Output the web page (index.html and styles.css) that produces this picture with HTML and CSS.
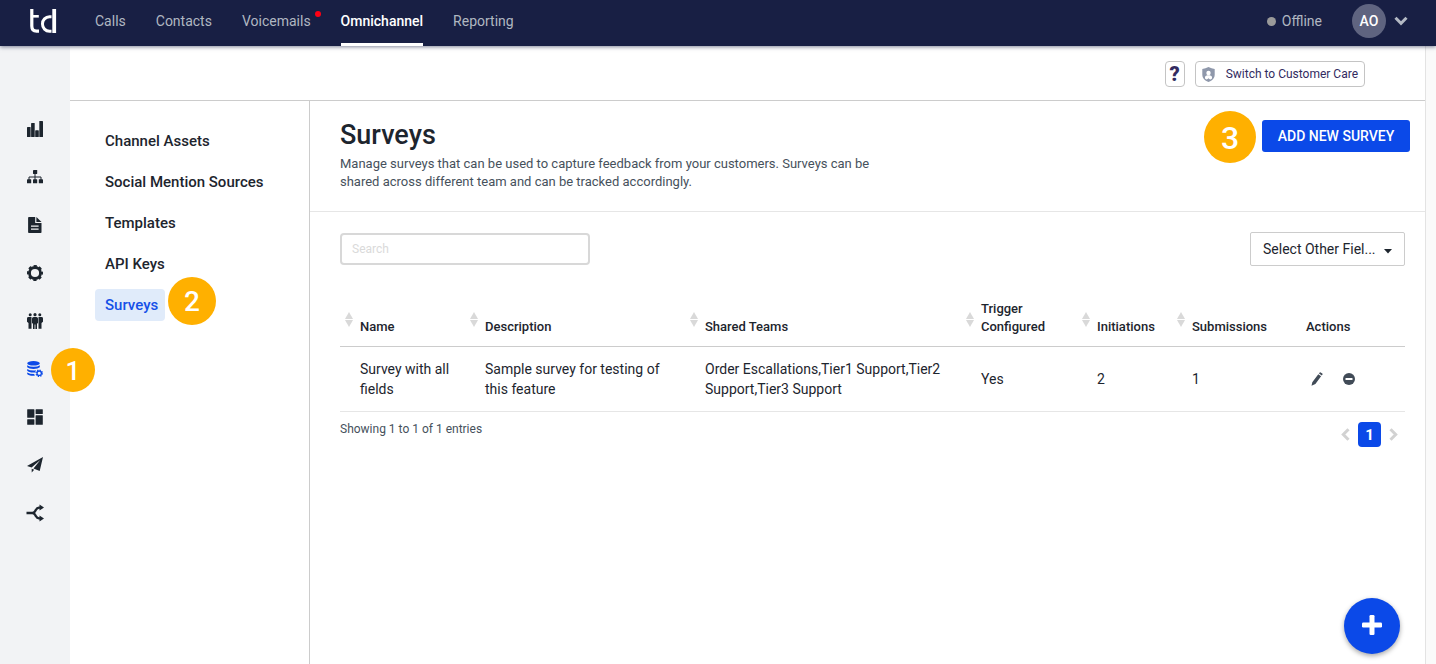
FILE: index.html
```html
<!DOCTYPE html>
<html lang="en">
<head>
<meta charset="utf-8">
<title>Surveys</title>
<link rel="stylesheet" href="styles.css">
</head>
<body>
<header class="topbar">
  <a class="logo" href="#" aria-label="Home">
    <svg width="28" height="26" viewBox="0 0 28 26" fill="none" stroke="#fff"><path d="M1.800 1v17q0 5.200 4.700 5.200H9" stroke-width="3.200"/><path d="M1 8.300h7.800" stroke-width="2.600"/><path d="M21.500 8.800h-2a7 7 0 0 0-7 7.200 7 7 0 0 0 7 7.200h2" stroke-width="3"/><path d="M24.200 1v24" stroke-width="3.800"/></svg>
  </a>
  <nav class="mainnav">
    <a href="#">Calls</a>
    <a href="#">Contacts</a>
    <a href="#" class="has-dot">Voicemails</a>
    <a href="#" class="active">Omnichannel</a>
    <a href="#">Reporting</a>
  </nav>
  <div class="account">
    <span class="status">Offline</span>
    <button class="profile" aria-label="Account menu">
      <span class="avatar">AO</span>
      <svg width="14" height="10" viewBox="0 0 14 10" fill="none" stroke="#b3b9c4" stroke-width="3"><path d="M1.500 1.800 7 7.300l5.500-5.500"/></svg>
    </button>
  </div>
</header>
<div class="shell">
  <nav class="rail" aria-label="Sections">
    <a href="#" aria-label="Analytics"><svg viewBox="0 0 16 16"><rect x="0" y="6" width="3.600" height="10" rx=".6"/><rect x="4.100" y="2" width="3.600" height="14" rx=".6"/><rect x="8.200" y="9.200" width="3.600" height="6.800" rx=".6"/><rect x="12.300" y="0" width="3.700" height="16" rx=".6"/></svg></a>
    <a href="#" aria-label="Hierarchy"><svg viewBox="0 0 16 16"><rect x="6" y="1" width="4.200" height="4" rx=".4"/><path d="M8 5v6M2 11V8h12v3" fill="none" stroke="currentColor" stroke-width="1"/><rect x="0" y="10.300" width="4.200" height="4" rx=".4"/><rect x="6" y="10.300" width="4.200" height="4" rx=".4"/><rect x="11.800" y="10.300" width="4.200" height="4" rx=".4"/></svg></a>
    <a href="#" aria-label="Documents"><svg viewBox="0 0 16 16"><path fill-rule="evenodd" d="M2 0h6.200v6h6.300v9.200q0 .8-.8.800H2q-.9 0-.9-.8V.8Q1.100 0 2 0zM4 8.600v1.200h7.600V8.600zM4 11.600v1.200h7.600v-1.200z"/><path d="M9.400 0 14.500 5H9.400z"/></svg></a>
    <a href="#" aria-label="Settings"><svg viewBox="0 0 16 16" fill="none"><circle cx="8" cy="8" r="5.500" stroke="currentColor" stroke-width="2.800" fill="none"/><circle cx="8" cy="8" r="7" stroke="currentColor" stroke-width="2" stroke-dasharray="3.200 2.298" stroke-dashoffset="1.600" fill="none"/></svg></a>
    <a href="#" aria-label="Teams"><svg viewBox="0 0 16 16"><circle cx="3.200" cy="1.700" r="1.500"/><circle cx="8" cy="1.700" r="1.600"/><circle cx="12.800" cy="1.700" r="1.500"/><path d="M1.500 4h3v11.700H1.500V10L0 8.700V5.400Q0 4 1.500 4zM14.500 4h-3v11.700h3V10L16 8.700V5.400Q16 4 14.500 4z"/><path d="M6.600 4h2.800q1.600 0 1.600 1.500V10l-1 .8V16H8.400v-4.500h-.8V16H6v-5.200L5 10V5.500Q5 4 6.600 4z"/></svg></a>
    <a href="#" class="active" aria-label="Data management"><svg viewBox="0 0 16 16"><ellipse cx="6.500" cy="2.300" rx="6.300" ry="2.300"/><path d="M.2 4.200q2 1.600 6.300 1.600t6.300-1.600v2Q11 8 6.500 8T.2 6.200zM.2 7.900q2 1.600 6.300 1.600 1.600 0 2.600-.2l-1.200 2.100q-6 .3-7.700-1.700zM.2 11.400q2.200 1.500 7 1.500l.6 1.900q-6.200.3-7.600-1.700z"/><circle cx="12.200" cy="12.200" r="2.200" stroke="currentColor" stroke-width="1.300" fill="none"/><circle cx="12.200" cy="12.200" r="3.200" stroke="currentColor" stroke-width="1.200" stroke-dasharray="1.300 1.213" fill="none"/></svg><span class="step step-1">1</span></a>
    <a href="#" aria-label="Dashboard"><svg viewBox="0 0 16 16"><rect x=".2" y=".2" width="7.200" height="8.600" rx=".5"/><rect x="8.600" y=".2" width="7.200" height="4.800" rx=".5"/><rect x=".2" y="10.200" width="7.200" height="5.600" rx=".5"/><rect x="8.600" y="6.300" width="7.200" height="9.500" rx=".5"/></svg></a>
    <a href="#" aria-label="Campaigns"><svg viewBox="0 0 16 16"><path d="M16 0 0 9l4.600 1.600L13.300 3 6.500 11.500l6.200 2.500zM4.700 11.800v3.800l2.500-2.800z"/></svg></a>
    <a href="#" aria-label="Routing"><svg class="wide" viewBox="0 0 18 18"><path d="M.5 9h5.700Q8 9 9 7.300l1-1.600Q11 3.800 13 3.600h1.500M6.200 9Q8 9 9 10.700l1 1.600q1 1.900 3 2.100h1.500" fill="none" stroke="currentColor" stroke-width="2.300"/><path d="M13.500.6 18 3.600l-4.500 3zM13.500 11.400l4.500 3-4.500 3z"/></svg></a>
  </nav>
  <div class="workspace">
    <div class="toolbar">
      <button class="help" aria-label="Help">?</button>
      <button class="switch"><svg width="13" height="15" viewBox="0 0 13 15"><path fill="#8f98ab" d="M6.500 0q3 1.700 6.200 1.900V8q0 4.500-6.200 7Q.3 12.500.3 8V1.900Q3.500 1.700 6.500 0z"/><circle cx="6.500" cy="6" r="2.200" fill="#fff"/><path fill="#fff" d="M3 11.500V10q0-1.300 2.300-1.700h2.400Q10 8.700 10 10v1.500q-1.200 1-1.900 1l-1.600-1.200-1.600 1.200q-.7 0-1.900-1z"/></svg>Switch to Customer Care</button>
    </div>
    <div class="columns">
      <nav class="subnav" aria-label="Data management">
        <a href="#">Channel Assets</a>
        <a href="#">Social Mention Sources</a>
        <a href="#">Templates</a>
        <a href="#">API Keys</a>
        <a href="#" class="active">Surveys<span class="step step-2">2</span></a>
      </nav>
      <main class="content">
        <section class="intro">
          <div class="intro-text">
            <h1>Surveys</h1>
            <p>Manage surveys that can be used to capture feedback from your customers. Surveys can be shared across different team and can be tracked accordingly.</p>
          </div>
          <div class="add-wrap">
            <button class="add">ADD NEW SURVEY</button>
            <span class="step step-3">3</span>
          </div>
        </section>
        <section class="listing">
          <div class="filters">
            <input class="search" type="search" placeholder="Search" aria-label="Search surveys">
            <div class="picker">
              <select aria-label="Other fields"><option>Select Other Fiel...</option></select>
              <svg width="8" height="5" viewBox="0 0 8 5"><path fill="#1d252e" d="M0 0h8L4 4.500z"/></svg>
            </div>
          </div>
          <table class="surveys">
            <colgroup><col class="c-name"><col class="c-desc"><col class="c-teams"><col class="c-trigger"><col class="c-init"><col class="c-sub"><col class="c-act"></colgroup>
            <thead>
              <tr>
                <th><button class="sort" aria-label="Sort by name"></button>Name</th>
                <th><button class="sort" aria-label="Sort by description"></button>Description</th>
                <th><button class="sort" aria-label="Sort by shared teams"></button>Shared Teams</th>
                <th><button class="sort" aria-label="Sort by trigger"></button>Trigger Configured</th>
                <th><button class="sort" aria-label="Sort by initiations"></button>Initiations</th>
                <th><button class="sort" aria-label="Sort by submissions"></button>Submissions</th>
                <th>Actions</th>
              </tr>
            </thead>
            <tbody>
              <tr>
                <td>Survey with all fields</td>
                <td>Sample survey for testing of this feature</td>
                <td>Order Escallations,Tier1 Support,Tier2 Support,Tier3 Support</td>
                <td>Yes</td>
                <td>2</td>
                <td>1</td>
                <td>
                  <div class="actions">
                    <button aria-label="Edit"><svg width="12" height="14" viewBox="0 0 12 14"><path d="M7.300 2.300 10.100 4.300 4.400 12 .5 13.700 1.300 10.200zM8 1.400 8.700.5Q9.100 0 9.700.4L11.300 1.600Q11.900 2 11.500 2.500L10.800 3.400z"/></svg></button>
                    <button aria-label="Deactivate"><svg width="12" height="12" viewBox="0 0 12 12"><circle cx="6" cy="6" r="6"/><rect x="2.500" y="5" width="7" height="2" rx=".3" fill="#fff"/></svg></button>
                  </div>
                </td>
              </tr>
            </tbody>
          </table>
          <div class="table-foot">
            <p>Showing 1 to 1 of 1 entries</p>
            <div class="pager">
              <button aria-label="Previous page"><svg width="9" height="13" viewBox="0 0 9 13"><path d="M7.500 1.200 2.300 6.500l5.200 5.300"/></svg></button>
              <button class="current">1</button>
              <button aria-label="Next page"><svg width="9" height="13" viewBox="0 0 9 13"><path d="M1.500 1.200 6.700 6.500l-5.200 5.300"/></svg></button>
            </div>
          </div>
        </section>
      </main>
    </div>
  </div>
</div>
<button class="fab" aria-label="Add"><svg width="20" height="20" viewBox="0 0 20 20" fill="#fff"><rect x="7.500" y="0" width="5" height="20" rx="1.200"/><rect x="0" y="7.500" width="20" height="5" rx="1.200"/></svg></button>
</body>
</html>
```
FILE: styles.css
```css
* { box-sizing: border-box; }
body {
  margin: 0;
  min-height: 100vh;
  display: flex;
  flex-direction: column;
  font-family: Roboto, "Liberation Sans", sans-serif;
  font-size: 14px;
  line-height: 20px;
  color: #1d252e;
  background: #fff;
}
a { color: inherit; text-decoration: none; }
button { font: inherit; color: inherit; border: 0; padding: 0; background: none; cursor: pointer; }
h1, p { margin: 0; }

.topbar {
  position: relative;
  z-index: 2;
  display: flex;
  height: 46px;
  padding: 0 28px 0 30px;
  background: #181f44;
  color: #b0b7c1;
  box-shadow: 0 1px 4px rgba(24, 31, 68, .55);
}
.logo { display: flex; width: 65px; padding-top: 8px; }
.mainnav { display: flex; gap: 30px; }
.mainnav a { position: relative; line-height: 43px; border-bottom: 3px solid transparent; }
.mainnav .active { color: #fff; border-color: #fff; font-weight: 500; }
.has-dot::after {
  content: "";
  position: absolute;
  top: 11px;
  right: -10px;
  width: 6px;
  height: 6px;
  border-radius: 50%;
  background: #ff0014;
}
.account { display: flex; align-items: center; gap: 30px; margin-left: auto; height: 42px; }
.status { display: flex; align-items: center; gap: 6px; }
.status::before { content: ""; width: 9px; height: 9px; border-radius: 50%; background: #9a9a9a; }
.profile { display: flex; align-items: center; gap: 8px; }
.avatar {
  width: 34px;
  height: 34px;
  border-radius: 50%;
  background: #5f6480;
  color: #fff;
  font-weight: 500;
  line-height: 34px;
  text-align: center;
}

.shell { display: flex; flex: 1; }
.rail { width: 70px; padding-top: 59px; background: #f2f3f5; }
.rail a { position: relative; display: flex; height: 48px; align-items: center; justify-content: center; }
.rail svg { width: 16px; height: 16px; fill: currentColor; }
.rail .wide { width: 18px; height: 18px; }
.rail .active { color: #0b49e8; }
.workspace { flex: 1; display: flex; flex-direction: column; margin-right: 10px; border-right: 1px solid #e3e3e3; box-shadow: 10px 0 #fafafa; }
.toolbar {
  display: flex;
  justify-content: flex-end;
  align-items: center;
  gap: 10px;
  height: 55px;
  padding: 2px 60px 0 0;
  border-bottom: 1px solid #ccc;
}
.toolbar button { height: 26px; border: 1px solid #c4c4c4; border-radius: 4px; background: #fff; color: #322b5f; }
.toolbar .help { width: 20px; font-size: 20px; font-weight: 900; line-height: 24px; }
.toolbar .switch { display: flex; align-items: center; gap: 11px; padding: 0 6px; font-size: 12px; }
.columns { display: flex; flex: 1; }
.subnav {
  display: flex;
  flex-direction: column;
  align-items: flex-start;
  gap: 9px;
  width: 240px;
  padding: 24px 25px;
  border-right: 1px solid #ccc;
  font-size: 15px;
  font-weight: 500;
}
.subnav a { position: relative; padding: 6px 7px 6px 10px; border-radius: 4px; }
.subnav .active { background: #e0ebfa; color: #1650e8; }

.step {
  position: absolute;
  border-radius: 50%;
  background: #ffb000;
  color: #fff;
  text-align: center;
  font-weight: 500;
}
.step-1 { left: 51px; top: 3px; width: 44px; height: 44px; font-size: 26px; line-height: 46px; z-index: 1; }
.step-2 { left: 73px; top: -12px; width: 48px; height: 48px; font-size: 28px; line-height: 50px; }
.step-3 { right: 154px; top: -9px; width: 52px; height: 52px; font-size: 32px; line-height: 54px; }

.content { flex: 1; }
.intro { display: flex; justify-content: space-between; padding: 19px 15px 20px 30px; border-bottom: 1px solid #e6e6e6; }
.intro-text { max-width: 550px; }
.intro h1 { font-size: 27px; line-height: 30px; font-weight: 500; margin-bottom: 5px; }
.intro p { font-size: 13px; line-height: 18px; color: #46515c; }
.add-wrap { position: relative; }
.add { min-width: 148px; height: 32px; padding: 0 15px; border-radius: 3px; background: #0b49e8; color: #fff; font-weight: 500; white-space: nowrap; }

.listing { padding: 20px 20px 20px 30px; }
.filters { display: flex; justify-content: space-between; align-items: center; margin-bottom: 24px; }
.search { width: 250px; height: 32px; padding: 0 10px; border: 2px solid #d8d8d8; border-radius: 4px; font: 12px Roboto, sans-serif; }
.search::placeholder { color: #dadada; }
.picker { position: relative; }
.picker select {
  appearance: none;
  width: 155px;
  height: 34px;
  padding: 0 28px 0 12px;
  border: 1px solid #ccc;
  border-radius: 2px;
  background: #fff;
  color: inherit;
  font: inherit;
}
.picker svg { position: absolute; right: 13px; top: 17px; pointer-events: none; }

.surveys { width: 100%; table-layout: fixed; border-collapse: separate; border-spacing: 0; }
.c-name { width: 125px; }
.c-desc { width: 220px; }
.c-teams { width: 276px; }
.c-trigger { width: 116px; }
.c-init { width: 95px; }
.c-sub { width: 114px; }
.c-act { width: 119px; }
.surveys th { position: relative; padding: 10px 10px 10px 20px; border-bottom: 1px solid #ccc; font-size: 13px; line-height: 18px; font-weight: 500; text-align: left; vertical-align: bottom; }
.surveys td { padding: 12px 10px 12px 20px; border-bottom: 1px solid #e6e6e6; vertical-align: middle; }
.sort { position: absolute; left: 5px; bottom: 19px; display: flex; flex-direction: column; gap: 1px; }
.sort::before, .sort::after { content: ""; border: 4px solid transparent; }
.sort::before { border-top: 0; border-bottom: 7px solid #d9d9d9; }
.sort::after { border-bottom: 0; border-top: 7px solid #d9d9d9; }
.actions { display: flex; align-items: center; gap: 20px; padding-left: 5px; }
.actions svg { display: block; fill: #414b57; }

.table-foot { display: flex; justify-content: space-between; align-items: flex-start; padding: 7px 7px 0 0; font-size: 12px; color: #46515c; }
.pager { display: flex; align-items: center; gap: 8px; padding-top: 3px; }
.pager svg { display: block; fill: none; stroke: #d2d2d2; stroke-width: 3; }
.pager .current { width: 23px; height: 25px; padding-top: 2px; border-radius: 4px; background: #0b49e8; color: #fff; font-size: 15px; font-weight: 700; line-height: 23px; }

.fab {
  position: fixed;
  right: 36px;
  bottom: 10px;
  display: flex;
  align-items: center;
  justify-content: center;
  width: 56px;
  height: 56px;
  padding-bottom: 2px;
  border-radius: 50%;
  background: #0b49e8;
  box-shadow: 0 2px 5px rgba(0, 0, 0, .35);
}
```
